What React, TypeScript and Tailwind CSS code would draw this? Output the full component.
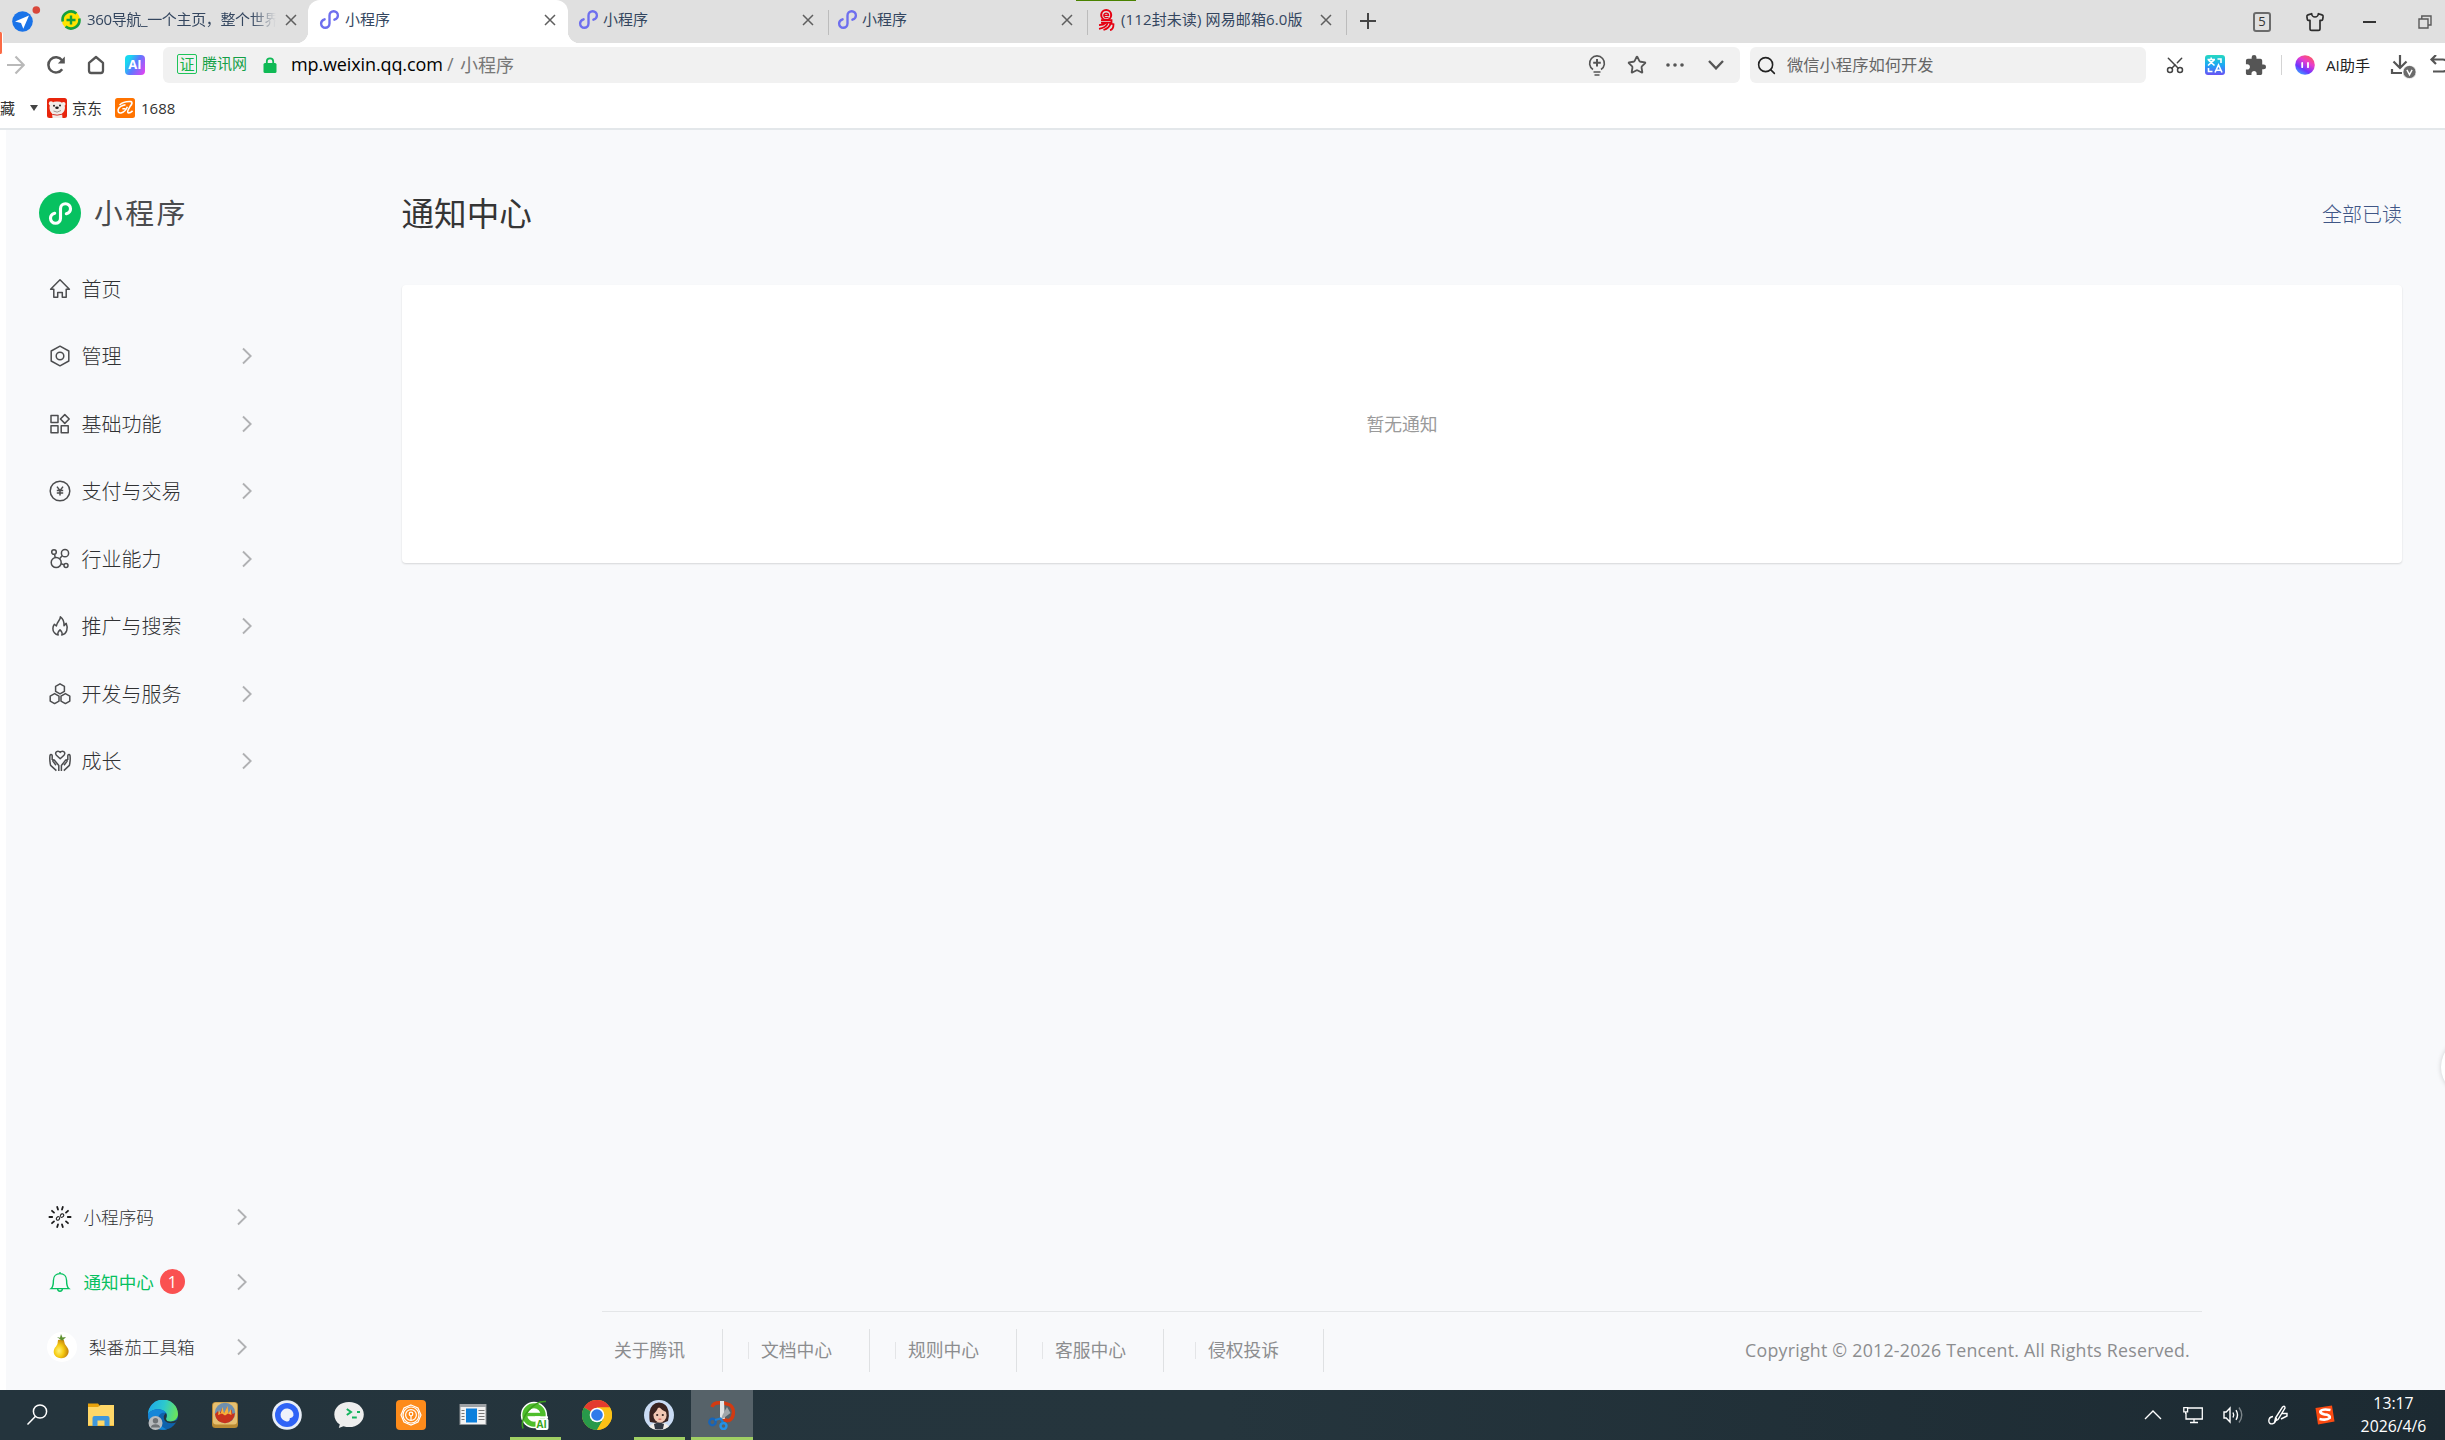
import React from 'react';
import { Search, Star, Scissors, Shirt } from 'lucide-react';
import { MdExtension } from 'react-icons/md';

interface IconProps {
  className?: string;
}

const MiniProgramMark: React.FC<IconProps & { weight?: number }> = ({ className, weight = 2.7 }) => (
  <svg viewBox="0 0 24 24" fill="none" stroke="currentColor" strokeWidth={weight} strokeLinecap="round" className={className}>
    <path d="M17.6 12.2C20.2 11.4 21.6 9.6 21.6 7.4C21.6 4.6 19.4 2.6 16.8 2.6C14.1 2.6 12 4.6 12 7.4V16.6C12 19.4 9.9 21.4 7.2 21.4C4.6 21.4 2.4 19.4 2.4 16.6C2.4 14.4 3.8 12.6 6.4 11.8" />
  </svg>
);

const CloseMark: React.FC<IconProps> = ({ className }) => (
  <svg viewBox="0 0 12 12" className={`w-3 h-3 shrink-0 text-[#5f5f5f] ${className ?? ''}`} fill="none" stroke="currentColor" strokeWidth="1.5">
    <path d="M1 1L11 11M11 1L1 11" />
  </svg>
);

const Chevron: React.FC<IconProps> = ({ className }) => (
  <svg viewBox="0 0 10 18" className={`w-[10px] h-[18px] shrink-0 ${className ?? ''}`} fill="none" stroke="#b0b1b3" strokeWidth="1.9">
    <path d="M1 1.5L8.7 9L1 16.5" />
  </svg>
);

const LineIcon: React.FC<{ children: React.ReactNode }> = ({ children }) => (
  <svg viewBox="0 0 24 24" className="w-6 h-6 shrink-0" fill="none" stroke="#4c4d4f" strokeWidth="1.5" strokeLinejoin="round">
    {children}
  </svg>
);

const menuItems = [
  {
    label: '首页',
    arrow: false,
    icon: <path d="M12 2.8L2.6 12.3H5.8V20.3H9.7V15.4H14.3V20.3H18.2V12.3H21.4Z" />,
  },
  {
    label: '管理',
    arrow: true,
    icon: (
      <>
        <path d="M12 2.2L20.8 7V17L12 21.8L3.2 17V7Z" />
        <circle cx="12" cy="12" r="3.8" />
      </>
    ),
  },
  {
    label: '基础功能',
    arrow: true,
    icon: (
      <>
        <rect x="3" y="3.6" width="7" height="7" />
        <rect x="3" y="13.7" width="7" height="7" />
        <rect x="13.2" y="13.7" width="7" height="7" />
        <path d="M16.8 2.6L21.2 7L16.8 11.4L12.4 7Z" />
      </>
    ),
  },
  {
    label: '支付与交易',
    arrow: true,
    icon: (
      <>
        <circle cx="12" cy="12" r="9.8" />
        <path d="M9 7.6L12 11.6L15 7.6M12 11.6V16.6M8.8 11.6H15.2M8.8 14H15.2" />
      </>
    ),
  },
  {
    label: '行业能力',
    arrow: true,
    icon: (
      <>
        <circle cx="6" cy="5" r="2.3" />
        <circle cx="17" cy="6.2" r="3.6" />
        <circle cx="8.2" cy="15.6" r="5" />
        <circle cx="18" cy="18.4" r="2" />
        <path d="M6.6 7.3L7.2 10.7M14.2 8.6L11.6 11.8M13 16.8L16 17.8" />
      </>
    ),
  },
  {
    label: '推广与搜索',
    arrow: true,
    icon: (
      <path d="M12.4 2.8C12.6 6.4 8.6 8 8.4 12L6.4 10.2C4.6 12.4 4.2 16.4 6.4 18.8C7.4 20 8.8 20.8 10.2 21C9.2 18.8 10.6 17.2 12 15.8C13.4 17.2 14.8 18.8 13.8 21C18.6 20.2 20.6 14.6 18.2 9.4L16 11.6C16.2 8 15 4.6 12.4 2.8Z" />
    ),
  },
  {
    label: '开发与服务',
    arrow: true,
    icon: (
      <>
        <path d="M12 1.8L16.4 4.3V9.3L12 11.8L7.6 9.3V4.3Z" />
        <path d="M6.6 11.6L11 14.1V19.1L6.6 21.6L2.2 19.1V14.1Z" />
        <path d="M17.4 11.6L21.8 14.1V19.1L17.4 21.6L13 19.1V14.1Z" />
      </>
    ),
  },
  {
    label: '成长',
    arrow: true,
    icon: (
      <>
        <path d="M12.2 9.8L8.4 6.3C6.6 4.2 8.2 2.2 10 2.2C11 2.2 11.8 2.8 12.2 3.4C12.6 2.8 13.4 2.2 14.4 2.2C16.2 2.2 17.8 4.2 16 6.3Z" />
        <path d="M10.8 22V16.5L6.6 11.4C5.4 10.2 4.4 11.4 5.2 12.6L8 16.2M8.4 21.6L2.6 16.4C1.8 13 1.6 9.4 2 6.4C2.4 5.2 4 5.4 4.2 6.6V11" />
        <path d="M13.4 22V16.5L17.4 11.4C18.6 10.2 19.6 11.4 18.8 12.6L16 16.2M15.8 21.6L21.4 16.4C22.2 13 22.4 9.4 22 6.4C21.6 5.2 20 5.4 19.8 6.6V11" />
      </>
    ),
  },
];

const footerLinks = [
  { label: '关于腾讯', className: 'w-[121px] pl-3' },
  { label: '文档中心', className: 'w-[147px] pl-[25px]', divider: true },
  { label: '规则中心', className: 'w-[147px] pl-[25px]', divider: true },
  { label: '客服中心', className: 'w-[147px] pl-[25px]', divider: true },
  { label: '侵权投诉', className: 'w-[160px] pl-[31px]', divider: true },
];

const TabBar: React.FC = () => (
  <div className="relative flex h-[43px] bg-[#e0e0e0] text-[15px] text-[#34465f]">
    <div className="absolute left-[1076px] top-0 w-[60px] h-px bg-[#4a8200]" />
    <div className="w-[50px] shrink-0">
      <svg viewBox="0 0 50 43" className="w-[50px] h-[43px]">
        <circle cx="22.5" cy="21.5" r="10.3" fill="#1a73e8" />
        <path d="M29 15.5L15 21.5L21 23L23.3 28.8Z" fill="#fff" />
        <circle cx="36.3" cy="10" r="3.8" fill="#d9483b" />
      </svg>
    </div>

    <div className="w-[258px] shrink-0 flex items-center pl-[11px] pb-1">
      <svg viewBox="0 0 20 20" className="w-5 h-5 shrink-0">
        <circle cx="10" cy="10" r="9.2" fill="#ffe400" />
        <path d="M1.7 11.5A8.4 8.4 0 0 1 15.4 3.6" fill="none" stroke="#15a03c" strokeWidth="2.6" />
        <path d="M18.3 8.5A8.4 8.4 0 0 1 4.6 16.4" fill="none" stroke="#15a03c" strokeWidth="2.6" />
        <path d="M10 5.5V14.5M5.5 10H14.5" stroke="#15a03c" strokeWidth="2.4" />
      </svg>
      <span className="ml-[6px] w-[189px] whitespace-nowrap tracking-[-0.35px] [mask-image:linear-gradient(to_right,black_87%,transparent)]">
        360导航_一个主页，整个世界
      </span>
      <CloseMark className="ml-[9px]" />
    </div>

    <div className="relative w-[260px] shrink-0 flex items-center pl-[11px] pb-1 bg-white rounded-t-xl before:absolute before:-left-3 before:bottom-0 before:w-3 before:h-3 before:bg-[radial-gradient(circle_at_0_0,#e0e0e0_12px,white_12.5px)] after:absolute after:-right-3 after:bottom-0 after:w-3 after:h-3 after:bg-[radial-gradient(circle_at_100%_0,#e0e0e0_12px,white_12.5px)]">
      <MiniProgramMark className="w-[21px] h-[21px] text-[#6e6fee]" />
      <span className="ml-[5px] w-[199px]">小程序</span>
      <CloseMark />
    </div>

    {[0, 1].map((tab) => (
      <div key={tab} className="w-[259px] shrink-0 flex items-center pl-[10px] pb-1">
        <MiniProgramMark className="w-[21px] h-[21px] text-[#6e6fee]" />
        <span className="ml-1 w-[199px]">小程序</span>
        <CloseMark />
        <div className="ml-auto mr-[-2px] mt-[5px] w-px h-[25px] bg-[#bcbcbc]" />
      </div>
    ))}

    <div className="w-[262px] shrink-0 flex items-center pl-[11px] pb-1">
      <svg viewBox="0 0 18 22" className="w-[18px] h-[22px] shrink-0" fill="none" stroke="#e60012" strokeWidth="2">
        <circle cx="9.2" cy="6" r="5" />
        <path d="M6.8 6.4H11.6C11.6 3.4 6.8 3.3 6.8 6.4C6.8 8.9 9.6 9 11.6 8" strokeWidth="1.3" />
        <path d="M4 11.2H14.5V13.6H4M2 16.2C5.5 16 7.5 15 8.5 14M2 19.8C6.5 19 9.5 17.5 10.5 14.5M6.5 21C11 19.5 13 17 13.5 14.5L16.5 15.2C16.5 18 15.5 20.5 13 21.2" strokeWidth="1.8" />
      </svg>
      <span className="ml-[6px] w-[199px] whitespace-nowrap tracking-[0.12px]">(112封未读) 网易邮箱6.0版</span>
      <CloseMark />
      <div className="ml-auto mt-[5px] mr-px w-px h-[25px] bg-[#bcbcbc]" />
    </div>

    <svg viewBox="0 0 16 16" className="ml-3 mt-[13px] w-4 h-4 shrink-0" stroke="#444" strokeWidth="2">
      <path d="M8 0V16M0 8H16" />
    </svg>

    <div className="ml-auto mr-[13px] flex items-center shrink-0">
      <span className="flex items-center justify-center w-[18px] h-5 rounded-[3px] border-2 border-[#6b6b6b] text-[13px] text-[#333]">5</span>
      <Shirt className="ml-[34px] w-5 h-5 text-[#2d2d2d]" strokeWidth={2} />
      <div className="ml-[38px] w-[13px] h-[2px] bg-[#333]" />
      <svg viewBox="0 0 14 14" className="ml-[42px] w-[14px] h-[14px]" fill="none" stroke="#5a5a5a" strokeWidth="1.4">
        <path d="M1 4H10V13H1ZM3.8 4V1H13V10H10" />
      </svg>
    </div>
  </div>
);

const Toolbar: React.FC = () => (
  <div className="flex items-center h-[44px] pl-[7px] bg-white overflow-hidden">
    <svg viewBox="0 0 18 20" className="w-[18px] h-5 shrink-0" fill="none" stroke="#b9b9b9" strokeWidth="2.2">
      <path d="M0 10H16.5M8.5 1.5L16.8 10L8.5 18.5" />
    </svg>
    <svg viewBox="0 0 20 20" className="ml-[21px] w-5 h-5 shrink-0" fill="none" stroke="#555" strokeWidth="2.5">
      <path d="M16.2 14.2A7.6 7.6 0 1 1 16 5.2" />
      <path d="M18.8 1.5V8.5H11.8Z" fill="#555" stroke="none" />
    </svg>
    <svg viewBox="0 0 20 20" className="ml-5 w-5 h-5 shrink-0" fill="none" stroke="#555" strokeWidth="2.3" strokeLinejoin="round">
      <path d="M10 2L17 7.8V15.5Q17 18 14.8 18H5.2Q3 18 3 15.5V7.8Z" />
    </svg>
    <div className="ml-[19px] w-5 h-5 shrink-0 rounded bg-[linear-gradient(120deg,#18d7f0_20%,#5a7bff_50%,#f03cf0)] text-white text-[13px] font-bold flex items-center justify-center">
      AI
    </div>

    <div className="ml-[18px] w-[1577px] h-9 shrink-0 rounded-md bg-[#f1f1f1] flex items-center pl-[14px]">
      <span className="w-5 h-5 mb-[2px] rounded-[2px] border-[1.5px] border-[#1fc45a] text-[#12b34a] text-[15px] leading-none flex items-center justify-center">证</span>
      <span className="ml-[5px] mb-[3px] w-[46px] text-[15px] text-[#15a047] whitespace-nowrap">腾讯网</span>
      <svg viewBox="0 0 14 17" className="ml-[15px] w-[14px] h-[17px]" fill="none">
        <rect x="0.5" y="6" width="13" height="10" rx="1.5" fill="#0fb955" />
        <path d="M3.8 7V4.5A3.2 3.2 0 0 1 10.2 4.5V7" stroke="#0fb955" strokeWidth="1.8" />
      </svg>
      <span className="ml-[14px] mb-[2px] w-[156px] text-lg text-black tracking-[-0.12px] whitespace-nowrap">mp.weixin.qq.com</span>
      <span className="mb-[2px] w-[13px] text-lg text-[#777]">/</span>
      <span className="mb-px text-lg text-[#777]">小程序</span>
      <div className="ml-auto flex items-center pr-4 text-[#555]">
        <svg viewBox="0 0 20 22" className="w-5 h-[22px]" fill="none" stroke="currentColor" strokeWidth="1.6">
          <path d="M6 15.5A7.4 7.4 0 1 1 14 15.5M6.5 18H13.5M7.5 21H12.5" />
          <path d="M10 5V12.6M6.2 8.8H13.8" strokeWidth="2" />
        </svg>
        <Star className="ml-5 w-5 h-5" strokeWidth={2.2} />
        <svg viewBox="0 0 18 4" className="ml-[19px] w-[18px] h-1" fill="currentColor">
          <circle cx="2" cy="2" r="1.8" />
          <circle cx="9" cy="2" r="1.8" />
          <circle cx="16" cy="2" r="1.8" />
        </svg>
        <svg viewBox="0 0 16 10" className="ml-6 w-4 h-[10px]" fill="none" stroke="currentColor" strokeWidth="2.3">
          <path d="M1 1L8 8.4L15 1" />
        </svg>
      </div>
    </div>

    <div className="ml-[10px] w-[396px] h-9 shrink-0 rounded-md bg-[#f1f1f1] flex items-center pl-[6px]">
      <Search className="w-[21px] h-[21px] text-[#222]" strokeWidth={1.8} />
      <span className="ml-[10px] text-[16.3px] text-[#666]">微信小程序如何开发</span>
    </div>

    <Scissors className="ml-[19px] w-5 h-5 shrink-0 -rotate-90 text-[#444]" strokeWidth={1.8} />
    <svg viewBox="0 0 20 20" className="ml-5 w-5 h-5 shrink-0">
      <defs>
        <linearGradient id="translate" x1="0" y1="0" x2="0" y2="1">
          <stop offset="0" stopColor="#26d9c0" />
          <stop offset="0.5" stopColor="#1ca8f5" />
          <stop offset="1" stopColor="#6a50f5" />
        </linearGradient>
      </defs>
      <rect width="20" height="20" rx="3" fill="url(#translate)" />
      <path d="M2.5 4.5H10M6.2 2.5V4.5M3 10.5L9.2 4.8M3.5 5.2L9.5 10.5M12.5 4H16V8M3.5 13V16.5H7.5M10 17.5L13.5 10L17 17.5M11 15.3H16" fill="none" stroke="#fff" strokeWidth="1.6" />
    </svg>
    <MdExtension className="ml-[19px] w-[23px] h-[23px] shrink-0 text-[#555]" />
    <div className="ml-[14px] w-px h-5 shrink-0 bg-[#d4d4d4]" />
    <svg viewBox="0 0 20 20" className="ml-[13px] w-5 h-5 shrink-0">
      <defs>
        <linearGradient id="assistant" x1="0.8" y1="0" x2="0.2" y2="1">
          <stop offset="0" stopColor="#ff5a55" />
          <stop offset="0.35" stopColor="#e83ccf" />
          <stop offset="0.7" stopColor="#6b35ff" />
          <stop offset="1" stopColor="#34b6ff" />
        </linearGradient>
      </defs>
      <circle cx="10" cy="10" r="9.8" fill="url(#assistant)" />
      <path d="M7.2 8V12.2M13 8V12.2" stroke="#fff" strokeWidth="1.8" strokeLinecap="round" />
    </svg>
    <span className="ml-[11px] w-[46px] shrink-0 text-[15.2px] text-[#222] whitespace-nowrap">AI助手</span>
    <svg viewBox="0 0 28 28" className="ml-[18px] w-7 h-7 shrink-0" fill="none" stroke="#555" strokeWidth="2.2">
      <path d="M10 4V16M3.5 10.5L10 17L16.5 10.5M2 18V22H12" />
      <circle cx="19.5" cy="21" r="6.6" fill="#6b6b6b" stroke="#fff" strokeWidth="0.8" />
      <path d="M16.9 18.8L19.5 23.7L22.1 18.8" stroke="#fff" strokeWidth="1.4" />
    </svg>
    <svg viewBox="0 0 22 20" className="ml-[11px] w-[22px] h-5 shrink-0" fill="none" stroke="#555" strokeWidth="2.2">
      <path d="M7 0L2.5 4.5L7 9M2.5 4.5H14Q19 5 19 10.5Q19 16 14 16.5H4" />
    </svg>
  </div>
);

const BookmarkBar: React.FC = () => (
  <div className="flex items-center h-[43px] pt-px bg-white border-b-2 border-[#e3e7ea] text-[15px] text-[#333] overflow-hidden">
    <span className="w-4">藏</span>
    <svg viewBox="0 0 8 6" className="ml-[14px] w-2 h-[6px]">
      <path d="M0 0H8L4 6Z" fill="#444" />
    </svg>
    <svg viewBox="0 0 20 20" className="ml-[9px] w-5 h-5">
      <rect width="20" height="20" rx="2.5" fill="#e8250c" />
      <circle cx="4" cy="5.5" r="2.2" fill="#f5f0ec" />
      <circle cx="16.5" cy="6" r="2" fill="#f5f0ec" />
      <path d="M2.5 9Q3.5 3.5 10 3.5Q17 3.5 18 9Q18 13.5 15 15.5L15.5 20H5.5L5 15.5Q2.5 13.5 2.5 9Z" fill="#f1ece8" />
      <circle cx="7" cy="7.8" r="1" fill="#222" />
      <circle cx="13" cy="7.4" r="1" fill="#222" />
      <ellipse cx="10" cy="9.8" rx="1.8" ry="1.2" fill="#222" />
      <path d="M6.5 13Q10 15.5 14 12.5" stroke="#8a7f7a" strokeWidth="0.8" fill="none" />
      <path d="M5.2 16.4Q10 18 15.2 16.2" stroke="#d3332a" strokeWidth="1" fill="none" />
    </svg>
    <span className="ml-[5px] w-[43px]">京东</span>
    <svg viewBox="0 0 20 20" className="w-5 h-5">
      <rect width="20" height="20" rx="2.5" fill="#ff7300" />
      <path d="M4.5 7Q9 3 16 3.6Q18.4 4.4 15 8.6Q11.8 13.6 13 14.8Q14.8 15.4 17.6 12.8M10.5 6.8Q4.4 8 3.2 11.4Q2.5 15.4 6 15Q10 14.2 12.4 8.8M7.4 10.8H10.4" fill="none" stroke="#fff" strokeWidth="1.6" />
    </svg>
    <span className="ml-[6px]">1688</span>
  </div>
);

const Sidebar: React.FC = () => (
  <aside className="w-[396px] h-full shrink-0 flex flex-col pt-[62px] text-[#303133]">
    <div className="flex items-center h-[42px] pl-[33px]">
      <div className="w-[42px] h-[42px] rounded-full bg-[#07c160] flex items-center justify-center text-white">
        <MiniProgramMark className="w-[25px] h-[25px]" weight={3} />
      </div>
      <span className="ml-[13px] text-[28.8px] tracking-[2.4px] text-[#4a4b4d]">小程序</span>
    </div>

    <nav className="mt-[21px] flex flex-col">
      {menuItems.map((item) => (
        <div key={item.label} className="flex items-center h-[67.5px] pl-[41.5px] pr-[150px]">
          <LineIcon>{item.icon}</LineIcon>
          <span className="ml-[10px] mt-[2px] text-xl font-light">{item.label}</span>
          {item.arrow && <Chevron className="ml-auto" />}
        </div>
      ))}
    </nav>

    <div className="mt-auto mb-[11px] flex flex-col text-[17.6px] font-light">
      <div className="flex items-center h-[65px] pl-[41.5px] pr-[155px]">
        <svg viewBox="0 0 24 24" className="w-6 h-6 shrink-0" stroke="#1c1c1c" strokeWidth="1.8" strokeLinecap="round">
          <path d="M10 4.6L9.2 1.9M14 4.6L14.8 1.9M6 7.6L4 5.8M18 7.6L20 5.8M4.2 12H1.4M19.8 12H22.6M6 16.4L4 18.2M18 16.4L20 18.2M10 19.4L9.2 22.1M14 19.4L14.8 22.1" />
          <path d="M13.6 12.4C15.4 12 16.2 10.8 15.6 9.6C15 8.4 13 8.6 12.6 10.2L11.4 13.8C11 15.4 9 15.6 8.4 14.4C8 13.2 8.8 12 10.4 11.6" fill="none" strokeWidth="1.1" />
        </svg>
        <span className="ml-3 mt-px">小程序码</span>
        <Chevron className="ml-auto" />
      </div>
      <div className="flex items-center h-[65px] pl-[41.5px] pr-[155px] text-[#07c160]">
        <svg viewBox="0 0 24 24" className="w-6 h-6 shrink-0" fill="none" stroke="currentColor" strokeWidth="1.4">
          <path d="M12 2V3.5M3.2 18.6C5.2 17 5.4 15.6 5.4 10.6C5.4 6.4 8.2 3.6 12 3.6C15.8 3.6 18.6 6.4 18.6 10.6C18.6 15.6 18.8 17 20.8 18.6ZM9.6 18.8A2.4 2.4 0 0 0 14.4 18.8" />
        </svg>
        <span className="ml-3 mt-px font-normal">通知中心</span>
        <span className="ml-[6px] w-[25px] h-[25px] rounded-full bg-[#fa5151] text-white text-base font-normal leading-none flex items-center justify-center">1</span>
        <Chevron className="ml-auto" />
      </div>
      <div className="flex items-center h-[65px] pl-[41px] pr-[155px]">
        <svg viewBox="0 0 30 30" className="w-[30px] h-[30px] shrink-0">
          <defs>
            <radialGradient id="pear" cx="0.35" cy="0.6" r="0.7">
              <stop offset="0" stopColor="#fff27a" />
              <stop offset="0.45" stopColor="#f6cb12" />
              <stop offset="1" stopColor="#b8720a" />
            </radialGradient>
          </defs>
          <circle cx="15" cy="15" r="15" fill="#fff" />
          <path d="M11 8Q14 7 16.8 8Q17.2 12 20 15Q23 19 20.5 23Q18 26.5 14 26.3Q8 26 6.8 21Q6.3 17 9 14.5Q11 12 11 8Z" fill="url(#pear)" />
          <path d="M14 8L10 5L13 5.8L14 2L15.5 5.5L19 5L15.5 8.5Z" fill="#5e9130" />
        </svg>
        <span className="ml-3 mt-px">梨番茄工具箱</span>
        <Chevron className="ml-auto" />
      </div>
    </div>
  </aside>
);

const MainPanel: React.FC = () => (
  <main className="flex-1 h-full flex flex-col pr-[43px]">
    <div className="flex items-center justify-between h-[49px] mt-[60px]">
      <h1 className="ml-[-0.5px] text-[32.6px] text-[#353535]">通知中心</h1>
      <a className="text-xl font-light text-[#3f5686]">全部已读</a>
    </div>
    <div className="mt-[46px] h-[278px] rounded-[4px] bg-white shadow-[0_1px_2px_rgba(0,0,0,0.14)] flex items-center justify-center text-[17.8px] text-[#9a9a9a]">
      暂无通知
    </div>
    <footer className="mt-auto ml-[200px] w-[1600px] h-[79px] border-t-[1.5px] border-[#e4e6e8] flex items-start pt-[17px] text-[17.8px] text-[#8c8d8f]">
      {footerLinks.map((link) => (
        <div key={link.label} className={`h-[43px] flex items-center border-r border-[#dfe1e3] ${link.className}`}>
          {link.divider && <div className="w-px h-[17px] mr-3 bg-[#e4e5e7]" />}
          <span>{link.label}</span>
        </div>
      ))}
      <span className="ml-auto mr-3 h-[43px] flex items-center whitespace-nowrap tracking-[0.23px]">
        Copyright © 2012-2026 Tencent. All Rights Reserved.
      </span>
    </footer>
  </main>
);

const TaskIcon: React.FC<{ children: React.ReactNode; open?: boolean; active?: boolean }> = ({ children, open, active }) => (
  <div className={`relative w-[62px] h-full shrink-0 flex items-center justify-center ${active ? 'bg-[#566269]' : ''}`}>
    <svg viewBox="0 0 30 30" className="w-[30px] h-[30px]">
      {children}
    </svg>
    {open && <div className="absolute bottom-0 left-[6px] right-[5px] h-[3px] bg-[#a0cf63]" />}
    {active && <div className="absolute bottom-0 left-0 right-0 h-[3px] bg-[#a0cf63]" />}
  </div>
);

const Taskbar: React.FC = () => (
  <div className="flex items-center h-[50px] pl-[8px] bg-[linear-gradient(90deg,#24343d,#25353d_50%,#1c2a32)] text-white">
    <TaskIcon>
      <g fill="none" stroke="#fff" strokeWidth="1.5">
        <circle cx="16" cy="11.5" r="6.6" />
        <path d="M11.3 16.4L3.5 24.4" />
      </g>
    </TaskIcon>
    <TaskIcon>
      <path d="M2 3.5H12L14 6H28V26H2Z" fill="#e8a20c" />
      <path d="M2 7H12L14.5 5H28V25.5H2Z" fill="#ffd768" />
      <path d="M6.5 26V18Q6.5 16 8.5 16H21.5Q23.5 16 23.5 18V26H18.5V20.5H11.5V26Z" fill="#3f97dc" />
    </TaskIcon>
    <TaskIcon>
      <defs>
        <linearGradient id="edge-top" x1="0" y1="0.3" x2="1" y2="0.5">
          <stop offset="0" stopColor="#1fa8e8" />
          <stop offset="0.5" stopColor="#2cc8cf" />
          <stop offset="1" stopColor="#6be45a" />
        </linearGradient>
      </defs>
      <circle cx="15" cy="15" r="15" fill="#0f62ac" />
      <path d="M0 15A15 15 0 0 1 30 14C30 19 26 21.5 22 21.5C18 21.5 17 19.5 18.4 17.6C20 15 18 10.5 12.5 9.5C6 8.6 1 11.5 0 15Z" fill="url(#edge-top)" />
      <path d="M0 15C1 11.5 6 8.6 12.5 9.5C15 10 17 11.2 18 13C13 11.5 10 15 10.5 19C11 24 14.5 28 19 29.3C8 32 0 24 0 15Z" fill="#1586d8" />
      <path d="M18.4 17.6C17 21.5 22 23.5 30 19.5L28 22.5Q21 24.5 17 21Q14 16 18 13Q19.5 15.5 18.4 17.6Z" fill="#24343d" />
      <circle cx="7.5" cy="23" r="7" fill="#b9bcbf" />
      <circle cx="7.5" cy="20.8" r="2.7" fill="#6f7377" />
      <path d="M2.8 27.5Q3.5 24.2 7.5 24.2Q11.5 24.2 12.2 27.5Z" fill="#6f7377" />
    </TaskIcon>
    <TaskIcon>
      <rect x="2" y="2" width="26" height="26" rx="3.5" fill="#b98a33" />
      <rect x="3" y="2.5" width="24" height="22" rx="3" fill="#e6bf70" />
      <circle cx="15" cy="13" r="10.2" fill="#6f8fae" />
      <path d="M5 14L8 11L9.5 14L12 8.5L14 14L17 7L18.5 14L21.5 9.5L22.5 14L25 13Q24 22.5 15 23.2Q6 22.5 5 14Z" fill="#c8321c" />
      <path d="M8 15L9 10L10.5 14L12.5 7L14 13.5L17.5 6L18.5 13.5L21 9L21.5 15L18 13.5L15 15.5L12 13.5Z" fill="#f7b23c" />
    </TaskIcon>
    <TaskIcon>
      <circle cx="15" cy="15" r="14.8" fill="#e8edf7" />
      <circle cx="15" cy="15" r="12" fill="#2f63f6" />
      <path d="M21.5 15.6A6.5 6.5 0 1 0 14.5 21.4Q18 22 17.8 18Q20.5 18.5 21.5 15.6Z" fill="#eef2fb" />
    </TaskIcon>
    <TaskIcon>
      <path d="M15 2C6.5 2 0.3 7.4 0.3 14.4C0.3 18.6 2.4 22.2 5.8 24.6L4.8 28L9.5 26.2C20 29.6 29.8 23 29.8 14.4C29.8 7.4 23.4 2 15 2Z" fill="#eeeeee" />
      <path d="M12.8 9L17 12L12.8 15M18 17.4H22.8M23 12H26" fill="none" stroke="#15b45e" strokeWidth="2" />
    </TaskIcon>
    <TaskIcon>
      <rect width="30" height="30" rx="4" fill="#fd8b1b" />
      <g fill="none" stroke="#fff" strokeWidth="1.2">
        <path d="M15 5L22 8L25 15L22 22L15 25L8 22L5 15L8 8Z" />
        <circle cx="15" cy="15" r="8" />
        <circle cx="15" cy="15" r="5.4" />
        <circle cx="15" cy="14" r="1.8" />
        <path d="M15 16V20" />
      </g>
    </TaskIcon>
    <TaskIcon>
      <rect x="2" y="4.5" width="26" height="20" fill="#f2f2f2" stroke="#8f9498" />
      <rect x="2" y="4" width="26" height="3" fill="#9da1a5" />
      <rect x="8" y="8.5" width="11" height="14" fill="#0b7fdc" />
      <path d="M3.5 10.5H6.5M3.5 13.5H6.5M3.5 16.5H6.5M3.5 19.5H6.5M20.5 10.5H26.5M20.5 13.5H26.5M20.5 16.5H26.5M20.5 19.5H26.5" stroke="#777" />
    </TaskIcon>
    <TaskIcon open>
      <circle cx="14" cy="15" r="13.2" fill="#fff" />
      <circle cx="14" cy="15" r="9.2" fill="none" stroke="#4fbe2c" strokeWidth="5" />
      <path d="M7 14.5H23" stroke="#4fbe2c" strokeWidth="3.4" />
      <path d="M15 18.6H28V16.3H15Z" fill="#fff" />
      <path d="M3 28.5C-0.5 18 13 0.5 26 1.5" fill="none" stroke="#3a9d1c" strokeWidth="1.6" />
      <rect x="15.5" y="18.5" width="13" height="11.5" rx="2" fill="#fff" />
      <text x="16.6" y="28" fontSize="10" fontWeight="700" fill="#39a51c" fontFamily="Open Sans, sans-serif">AI</text>
    </TaskIcon>
    <TaskIcon>
      <circle cx="15" cy="15" r="15" fill="#fbc116" />
      <path d="M15 15L2 7.5A15 15 0 0 1 28 7.5H15Z" fill="#e33b2e" />
      <path d="M15 15L2 7.5A15 15 0 0 0 15 30L21.5 18.8Z" fill="#28994a" />
      <path d="M15 30L21.5 18.8L21.7 11.7L15 7.5H28A15 15 0 0 1 15 30Z" fill="#fbc116" />
      <circle cx="15" cy="15" r="7.3" fill="#fff" />
      <circle cx="15" cy="15" r="5.8" fill="#2f7bea" />
    </TaskIcon>
    <TaskIcon open>
      <circle cx="15" cy="15" r="15" fill="#c9dbf4" />
      <path d="M15 2.5Q7 3 5.5 12Q5 19 6 22L12 23H19L24 21Q25.5 16 24.5 11Q23 3 15 2.5Z" fill="#3a2320" />
      <path d="M5 26.5Q9 22.5 15.5 22.5Q22 22.5 25 26.5Q20.5 30 15 30Q9 30 5 26.5Z" fill="#f1ede9" />
      <path d="M10 24Q15 21.5 20 24L19 29Q15 30 11 29Z" fill="#303742" />
      <ellipse cx="16" cy="15" rx="6.6" ry="7.6" fill="#f2c7b3" />
      <path d="M8.5 14.5Q13 12 14.5 6Q18 11 23 12Q23 4 15 4Q8 5 8.5 14.5Z" fill="#3a2320" />
      <circle cx="13.2" cy="15" r="1.1" fill="#33211f" />
      <circle cx="18.8" cy="15" r="1.1" fill="#33211f" />
      <path d="M14.5 19.2H17.3" stroke="#cf5a55" strokeWidth="1.1" />
    </TaskIcon>
    <div className="w-px" />
    <TaskIcon active>
      <path d="M5 7C7 0.5 18 3 23 5C28 9 27 17 23 20C19 22 15 18 14 17" fill="none" stroke="#d23a12" strokeWidth="3.4" />
      <path d="M13 1H17L17.8 19H13Z" fill="#e3e5e6" />
      <path d="M15.5 15L20 7L23.5 13L14 20Z" fill="#a1a7ab" />
      <circle cx="5.5" cy="22" r="3.2" fill="none" stroke="#1764b8" strokeWidth="2.4" />
      <circle cx="16.5" cy="26" r="3" fill="none" stroke="#2391e6" strokeWidth="2.4" />
      <path d="M8 20L13.5 18.5L16 22" fill="none" stroke="#1d7ed2" strokeWidth="2.2" />
    </TaskIcon>

    <div className="ml-auto flex items-center">
      <svg viewBox="0 0 18 12" className="w-[18px] h-3" fill="none" stroke="#fff" strokeWidth="1.4">
        <path d="M1 10L9 2L17 10" />
      </svg>
      <svg viewBox="0 0 20 18" className="ml-[21px] w-5 h-[18px]" fill="none" stroke="#fff" strokeWidth="1.3">
        <path d="M5 2H19.3V13H3V7M7 16.5H15M11 13V16.5M0.8 1.6H4.6V5.8H0.8ZM2.7 5.8V8" />
      </svg>
      <svg viewBox="0 0 22 18" className="ml-5 w-[22px] h-[18px]" fill="none" stroke="#fff" strokeWidth="1.4">
        <path d="M1 6V12H3.2L7 16V2L3.2 6Z" />
        <path d="M10 6.5Q11.5 9 10 11.5M13 4.2Q16 9 13 13.8" />
        <path d="M16 1.5Q21.5 9 16 16.5" stroke="#7c858a" />
      </svg>
      <svg viewBox="0 0 20 20" className="ml-[23px] w-5 h-5" fill="none" stroke="#fff" strokeWidth="1.4">
        <path d="M7.5 13L14.5 2Q17 0.2 17 3L10 14.5L6.8 16.2ZM5 11.5Q0.8 12 0.8 16Q1.2 19.3 4.5 18.8Q8 18 8.5 13M13.5 8.5H19V11L13 14" />
      </svg>
      <svg viewBox="0 0 20 20" className="ml-[27px] w-5 h-5">
        <path d="M0.5 3L17 0.5L19.5 16.5L3 19.5Z" fill="#fb4a11" />
        <path d="M15.5 5Q7 3.4 5.3 6.4Q5 8.6 9.5 9.4Q15.5 10 14.8 12.8Q12 15.6 4.5 14" fill="none" stroke="#fff" strokeWidth="2.6" />
      </svg>
      <div className="ml-[15px] mr-[8px] w-[87px] flex flex-col items-center text-[15.8px] leading-[23px]">
        <span>13:17</span>
        <span>2026/4/6</span>
      </div>
    </div>
  </div>
);

const App: React.FC = () => (
  <div className="relative w-[2445px] h-[1440px] flex flex-col overflow-hidden bg-white font-['Open_Sans','Noto_Sans_CJK_SC',sans-serif]">
    <TabBar />
    <Toolbar />
    <BookmarkBar />
    <div className="flex-1 min-h-0 flex ml-[6px] bg-[#f8f9fb]">
      <Sidebar />
      <MainPanel />
    </div>
    <Taskbar />
    <div className="absolute left-0 top-8 w-[3px] h-[22px] rounded-r-[2px] bg-[#fb6a45] border-r border-white" />
    <div className="absolute left-[2441px] top-[1038px] w-[58px] h-[58px] rounded-full bg-white shadow-[0_0_5px_rgba(0,0,0,0.18)]" />
  </div>
);

export default App;
